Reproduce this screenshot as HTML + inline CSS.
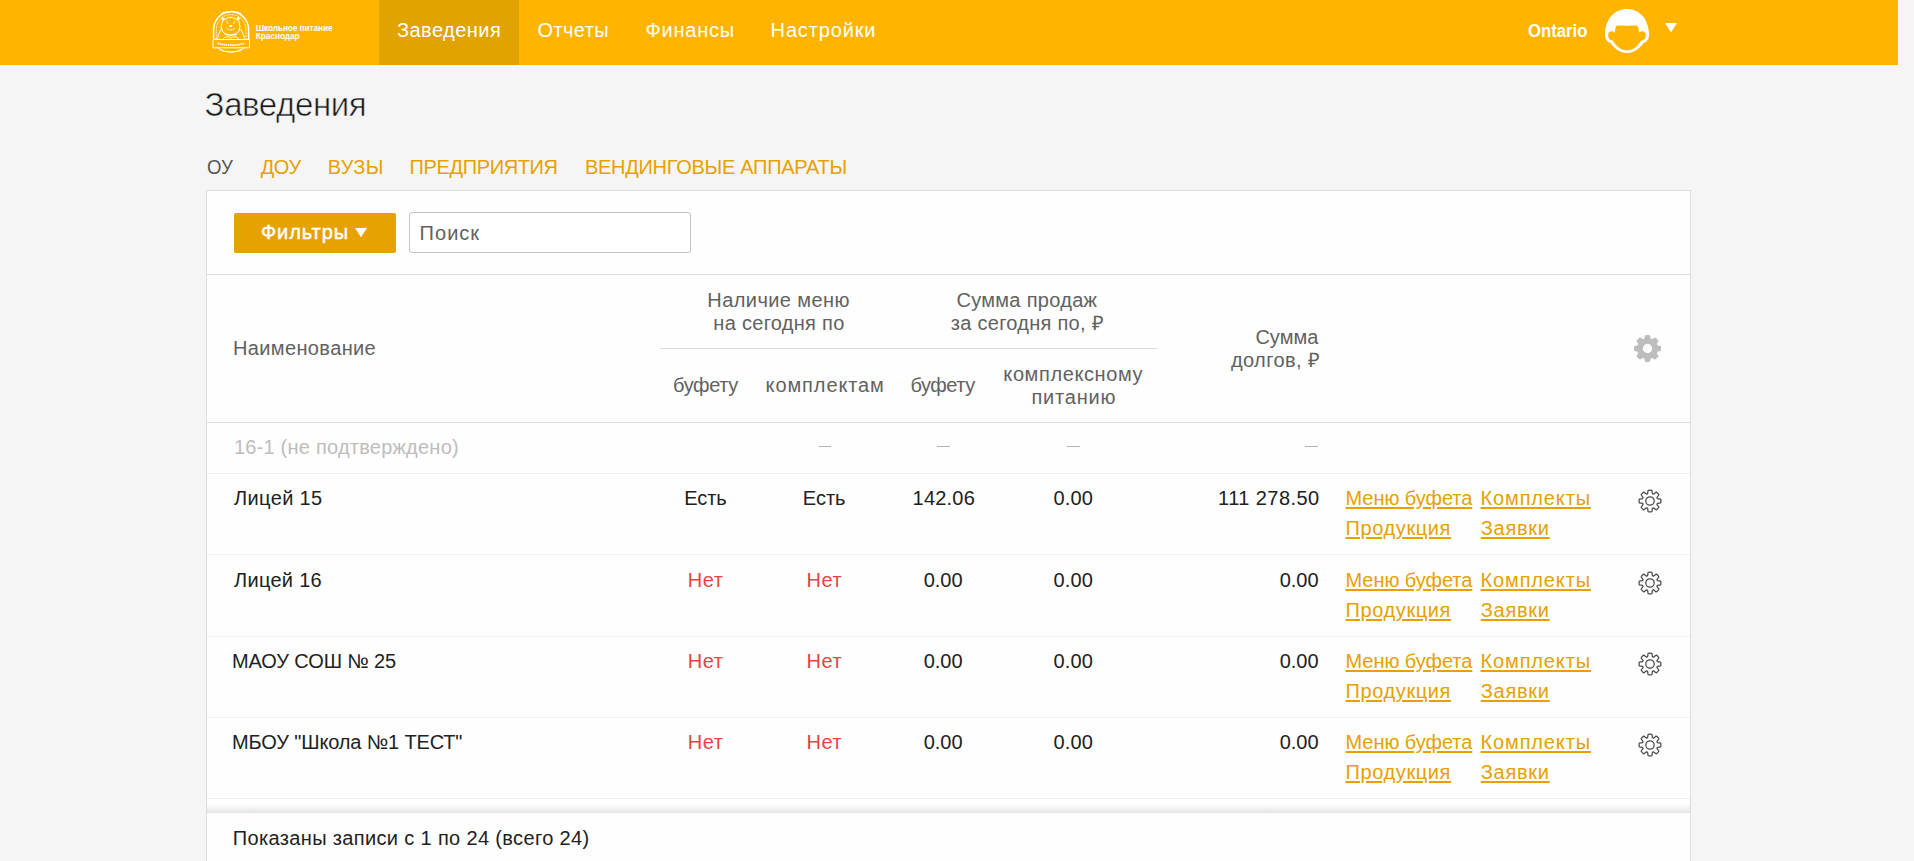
<!DOCTYPE html>
<html lang="ru"><head><meta charset="utf-8"><title>Заведения</title>
<style>
*{box-sizing:border-box}
html,body{margin:0;padding:0;width:1914px;height:861px;overflow:hidden;background:#f5f5f5;font-family:'Liberation Sans',sans-serif}
.t{position:absolute;white-space:pre;font-family:'Liberation Sans',sans-serif}
.u{text-decoration:underline;text-decoration-thickness:2px;text-underline-offset:2px}
.abs{position:absolute}
</style></head>
<body>
<div class="abs" style="left:0;top:0;width:1898px;height:65px;background:#ffb500"></div>
<div class="abs" style="left:379px;top:0;width:140px;height:65px;background:#e0a300"></div>
<svg class="abs" style="left:210px;top:8px" width="42" height="48" viewBox="0 0 42 48" fill="none" stroke="#fff" stroke-width="1">
<path d="M3.6,31.5 L3.6,21.3 A17.5,17.5 0 0 1 38.6,21.3 L38.6,31.5" stroke-width="1.5"/>
<path d="M6.3,31 L6.3,21.3 A14.8,14.8 0 0 1 35.9,21.3 L35.9,31" stroke-width="0.8" stroke-dasharray="2 0.8"/>
<path d="M11,6 Q14,3.5 17,4.5 Q21,2.5 25,4.5 Q28,3.5 31,6" stroke-width="1.1"/>
<path d="M12.5,13 Q20.6,5.5 28.7,13 Q31.5,19 28.5,24 Q20.6,30 12.7,24 Q9.7,19 12.5,13 Z" stroke-width="1"/>
<circle cx="13" cy="10.8" r="1.6" fill="#fff" stroke="none"/><circle cx="28.2" cy="10.5" r="1.6" fill="#fff" stroke="none"/>
<ellipse cx="20.8" cy="18" rx="1.8" ry="1.1" fill="#fff" stroke="none"/>
<path d="M16.5,12.5 L18,16 M25,12.5 L23.5,16 M16.5,20 Q20.8,24 25,20" stroke-width="0.8"/>
<path d="M11,21 Q8,26 7.5,31 M30.5,21 Q34,26 34.5,31 M13,31 Q17,27 21,30 Q25,27 29,31 M15,26.5 Q21,28.5 27,26.5" stroke-width="0.9"/>
<path d="M3,31.5 L39.5,31.5 L39.5,39.8 L3,39.8 Z" stroke-width="1"/>
<path d="M7.5,35.3 Q21,39 34.5,35.3" stroke-width="1.6" stroke-dasharray="1.5 0.6"/>
<path d="M7.5,40 Q21,48.5 34.5,40 M10,42 Q21,46 32,42" stroke-width="0.9"/>
</svg>
<div class="t" style="left:1528.1px;top:22px;font-size:18px;line-height:18px;font-weight:700;color:#fff;transform:scaleX(0.927);transform-origin:0 0">Ontario</div>
<svg class="abs" style="left:1605px;top:9px" width="44" height="44" viewBox="0 0 44 44">
<path fill="#fff" d="M22,0 C34,0 43,9 44,24 C44.4,30 42,33 38.5,34 C34.5,40 28.5,44 22,44 C15.5,44 9.5,40 5.5,34 C2,33 -0.4,30 0,24 C1,9 10,0 22,0 Z"/>
<path fill="#ffb500" d="M10.6,18.6 C10.8,17 12,16.6 14,16.6 C18,16.8 26,16.8 30,16.6 C32,16.6 33,17 33.3,18.6 L34.3,23.7 C36.5,21.5 40.5,21.8 40.8,25.5 C41.1,29 39,31.6 36.2,31.4 C32.5,37.8 27.5,41.2 22,41.2 C16.5,41.2 11.5,37.8 7.8,31.4 C5,31.6 2.9,29 3.2,25.5 C3.5,21.8 7.5,21.5 9.7,23.7 Z"/>
</svg>
<svg class="abs" style="left:1665px;top:23px" width="12" height="10" viewBox="0 0 12 10"><path fill="#fff" d="M0,0 L12,0 L6,9.5 Z"/></svg>
<div class="abs" style="left:206px;top:190px;width:1485px;height:700px;background:#fefefe;border:1px solid #dcdcdc"></div>
<div class="abs" style="left:207px;top:274px;width:1483px;height:1px;background:#dcdcdc"></div>
<div class="abs" style="left:234px;top:213px;width:162px;height:40px;background:#e6a200;border-radius:2px"></div>
<svg class="abs" style="left:355px;top:228px" width="12" height="10" viewBox="0 0 12 10"><path fill="#fff" d="M0,0 L12,0 L6,9.3 Z"/></svg>
<div class="abs" style="left:409px;top:212px;width:282px;height:41px;background:#fff;border:1px solid #c4c4c4;border-radius:3px"></div>
<div class="abs" style="left:660px;top:348px;width:497px;height:1px;background:#dcdcdc"></div>
<div class="abs" style="left:207px;top:422px;width:1483px;height:1px;background:#dcdcdc"></div>
<div class="abs" style="left:207px;top:473px;width:1483px;height:1px;background:#f0f0f0"></div>
<div class="abs" style="left:207px;top:554px;width:1483px;height:1px;background:#f0f0f0"></div>
<div class="abs" style="left:207px;top:636px;width:1483px;height:1px;background:#f0f0f0"></div>
<div class="abs" style="left:207px;top:717px;width:1483px;height:1px;background:#f0f0f0"></div>
<div class="abs" style="left:207px;top:798px;width:1483px;height:1px;background:#f0f0f0"></div>
<div class="abs" style="left:207px;top:804px;width:1483px;height:9px;background:linear-gradient(#fefefe,#e4e4e4)"></div>
<svg class="abs" style="left:1634px;top:335px" width="27" height="27" viewBox="0 0 27 27"><path fill="#bdbdbd" stroke="#bdbdbd" stroke-width="1.2" stroke-linejoin="round" d="M10.80,3.98L11.60,0.74A12.9,12.9 0 0 1 15.40,0.74L16.20,3.98A9.9,9.9 0 0 1 18.33,4.86L21.18,3.13A12.9,12.9 0 0 1 23.87,5.82L22.14,8.67A9.9,9.9 0 0 1 23.02,10.80L26.26,11.60A12.9,12.9 0 0 1 26.26,15.40L23.02,16.20A9.9,9.9 0 0 1 22.14,18.33L23.87,21.18A12.9,12.9 0 0 1 21.18,23.87L18.33,22.14A9.9,9.9 0 0 1 16.20,23.02L15.40,26.26A12.9,12.9 0 0 1 11.60,26.26L10.80,23.02A9.9,9.9 0 0 1 8.67,22.14L5.82,23.87A12.9,12.9 0 0 1 3.13,21.18L4.86,18.33A9.9,9.9 0 0 1 3.98,16.20L0.74,15.40A12.9,12.9 0 0 1 0.74,11.60L3.98,10.80A9.9,9.9 0 0 1 4.86,8.67L3.13,5.82A12.9,12.9 0 0 1 5.82,3.13L8.67,4.86A9.9,9.9 0 0 1 10.80,3.98Z"/><path fill="#fdfdfd" d="M8.80,13.50a4.7,4.7 0 1 0 9.40,0a4.7,4.7 0 1 0 -9.40,0Z"/></svg>
<svg class="abs" style="left:1637.5px;top:488.5px" width="24" height="24" viewBox="0 0 24 24" fill="none" stroke="#4a4a4a" stroke-width="1.25" stroke-linejoin="round"><path d="M9.60,4.68L10.10,1.27A10.9,10.9 0 0 1 13.90,1.27L14.40,4.68A7.7,7.7 0 0 1 15.48,5.13L18.25,3.07A10.9,10.9 0 0 1 20.93,5.75L18.87,8.52A7.7,7.7 0 0 1 19.32,9.60L22.73,10.10A10.9,10.9 0 0 1 22.73,13.90L19.32,14.40A7.7,7.7 0 0 1 18.87,15.48L20.93,18.25A10.9,10.9 0 0 1 18.25,20.93L15.48,18.87A7.7,7.7 0 0 1 14.40,19.32L13.90,22.73A10.9,10.9 0 0 1 10.10,22.73L9.60,19.32A7.7,7.7 0 0 1 8.52,18.87L5.75,20.93A10.9,10.9 0 0 1 3.07,18.25L5.13,15.48A7.7,7.7 0 0 1 4.68,14.40L1.27,13.90A10.9,10.9 0 0 1 1.27,10.10L4.68,9.60A7.7,7.7 0 0 1 5.13,8.52L3.07,5.75A10.9,10.9 0 0 1 5.75,3.07L8.52,5.13A7.7,7.7 0 0 1 9.60,4.68Z"/><circle cx="12" cy="12" r="4.2"/></svg>
<svg class="abs" style="left:1637.5px;top:570.5px" width="24" height="24" viewBox="0 0 24 24" fill="none" stroke="#4a4a4a" stroke-width="1.25" stroke-linejoin="round"><path d="M9.60,4.68L10.10,1.27A10.9,10.9 0 0 1 13.90,1.27L14.40,4.68A7.7,7.7 0 0 1 15.48,5.13L18.25,3.07A10.9,10.9 0 0 1 20.93,5.75L18.87,8.52A7.7,7.7 0 0 1 19.32,9.60L22.73,10.10A10.9,10.9 0 0 1 22.73,13.90L19.32,14.40A7.7,7.7 0 0 1 18.87,15.48L20.93,18.25A10.9,10.9 0 0 1 18.25,20.93L15.48,18.87A7.7,7.7 0 0 1 14.40,19.32L13.90,22.73A10.9,10.9 0 0 1 10.10,22.73L9.60,19.32A7.7,7.7 0 0 1 8.52,18.87L5.75,20.93A10.9,10.9 0 0 1 3.07,18.25L5.13,15.48A7.7,7.7 0 0 1 4.68,14.40L1.27,13.90A10.9,10.9 0 0 1 1.27,10.10L4.68,9.60A7.7,7.7 0 0 1 5.13,8.52L3.07,5.75A10.9,10.9 0 0 1 5.75,3.07L8.52,5.13A7.7,7.7 0 0 1 9.60,4.68Z"/><circle cx="12" cy="12" r="4.2"/></svg>
<svg class="abs" style="left:1637.5px;top:651.5px" width="24" height="24" viewBox="0 0 24 24" fill="none" stroke="#4a4a4a" stroke-width="1.25" stroke-linejoin="round"><path d="M9.60,4.68L10.10,1.27A10.9,10.9 0 0 1 13.90,1.27L14.40,4.68A7.7,7.7 0 0 1 15.48,5.13L18.25,3.07A10.9,10.9 0 0 1 20.93,5.75L18.87,8.52A7.7,7.7 0 0 1 19.32,9.60L22.73,10.10A10.9,10.9 0 0 1 22.73,13.90L19.32,14.40A7.7,7.7 0 0 1 18.87,15.48L20.93,18.25A10.9,10.9 0 0 1 18.25,20.93L15.48,18.87A7.7,7.7 0 0 1 14.40,19.32L13.90,22.73A10.9,10.9 0 0 1 10.10,22.73L9.60,19.32A7.7,7.7 0 0 1 8.52,18.87L5.75,20.93A10.9,10.9 0 0 1 3.07,18.25L5.13,15.48A7.7,7.7 0 0 1 4.68,14.40L1.27,13.90A10.9,10.9 0 0 1 1.27,10.10L4.68,9.60A7.7,7.7 0 0 1 5.13,8.52L3.07,5.75A10.9,10.9 0 0 1 5.75,3.07L8.52,5.13A7.7,7.7 0 0 1 9.60,4.68Z"/><circle cx="12" cy="12" r="4.2"/></svg>
<svg class="abs" style="left:1637.5px;top:732.5px" width="24" height="24" viewBox="0 0 24 24" fill="none" stroke="#4a4a4a" stroke-width="1.25" stroke-linejoin="round"><path d="M9.60,4.68L10.10,1.27A10.9,10.9 0 0 1 13.90,1.27L14.40,4.68A7.7,7.7 0 0 1 15.48,5.13L18.25,3.07A10.9,10.9 0 0 1 20.93,5.75L18.87,8.52A7.7,7.7 0 0 1 19.32,9.60L22.73,10.10A10.9,10.9 0 0 1 22.73,13.90L19.32,14.40A7.7,7.7 0 0 1 18.87,15.48L20.93,18.25A10.9,10.9 0 0 1 18.25,20.93L15.48,18.87A7.7,7.7 0 0 1 14.40,19.32L13.90,22.73A10.9,10.9 0 0 1 10.10,22.73L9.60,19.32A7.7,7.7 0 0 1 8.52,18.87L5.75,20.93A10.9,10.9 0 0 1 3.07,18.25L5.13,15.48A7.7,7.7 0 0 1 4.68,14.40L1.27,13.90A10.9,10.9 0 0 1 1.27,10.10L4.68,9.60A7.7,7.7 0 0 1 5.13,8.52L3.07,5.75A10.9,10.9 0 0 1 5.75,3.07L8.52,5.13A7.7,7.7 0 0 1 9.60,4.68Z"/><circle cx="12" cy="12" r="4.2"/></svg>
<div class="abs" style="left:818.6px;top:446px;width:12.7px;height:1px;background:#b3b3b3"></div>
<div class="abs" style="left:937.0px;top:446px;width:12.8px;height:1px;background:#b3b3b3"></div>
<div class="abs" style="left:1067.2px;top:446px;width:12.8px;height:1px;background:#b3b3b3"></div>
<div class="abs" style="left:1305.4px;top:446px;width:12.5px;height:1px;background:#b3b3b3"></div>
<div class="t" style="left:255.80px;top:23.80px;font-size:8.3px;line-height:8.3px;font-weight:700;color:#ffffff;letter-spacing:-0.093px;">Школьное питание</div>
<div class="t" style="left:255.80px;top:31.70px;font-size:8.3px;line-height:8.3px;font-weight:700;color:#ffffff;letter-spacing:-0.050px;">Краснодар</div>
<div class="t" style="left:397.00px;top:20.00px;font-size:20px;line-height:20px;font-weight:400;color:#ffffff;letter-spacing:0.450px;">Заведения</div>
<div class="t" style="left:537.50px;top:20.00px;font-size:20px;line-height:20px;font-weight:400;color:#ffffff;letter-spacing:0.400px;">Отчеты</div>
<div class="t" style="left:645.60px;top:20.00px;font-size:20px;line-height:20px;font-weight:400;color:#ffffff;letter-spacing:0.750px;">Финансы</div>
<div class="t" style="left:770.60px;top:20.00px;font-size:20px;line-height:20px;font-weight:400;color:#ffffff;letter-spacing:0.850px;">Настройки</div>
<div class="t" style="left:204.60px;top:87.60px;font-size:33px;line-height:33px;font-weight:400;color:#1a1a1a;letter-spacing:-0.400px;-webkit-text-stroke:0.6px #f5f5f5">Заведения</div>
<div class="t" style="left:206.77px;top:156.70px;font-size:20px;line-height:20px;font-weight:400;color:#555555;letter-spacing:0.000px;;transform:scaleX(0.9296);transform-origin:0 0">ОУ</div>
<div class="t" style="left:260.70px;top:156.70px;font-size:20px;line-height:20px;font-weight:400;color:#e6a100;letter-spacing:-0.400px;">ДОУ</div>
<div class="t" style="left:327.80px;top:156.70px;font-size:20px;line-height:20px;font-weight:400;color:#e6a100;letter-spacing:0.300px;">ВУЗЫ</div>
<div class="t" style="left:409.50px;top:156.70px;font-size:20px;line-height:20px;font-weight:400;color:#e6a100;letter-spacing:-0.360px;">ПРЕДПРИЯТИЯ</div>
<div class="t" style="left:584.90px;top:156.70px;font-size:20px;line-height:20px;font-weight:400;color:#e6a100;letter-spacing:-0.279px;">ВЕНДИНГОВЫЕ АППАРАТЫ</div>
<div class="t" style="left:260.90px;top:221.50px;font-size:20px;line-height:20px;font-weight:400;color:#ffffff;letter-spacing:0.950px;-webkit-text-stroke:0.45px #fff">Фильтры</div>
<div class="t" style="left:419.60px;top:222.60px;font-size:20px;line-height:20px;font-weight:400;color:#616161;letter-spacing:1.025px;">Поиск</div>
<div class="t" style="left:232.90px;top:338.00px;font-size:20px;line-height:20px;font-weight:400;color:#616161;letter-spacing:0.382px;">Наименование</div>
<div class="t" style="left:707.30px;top:289.80px;font-size:20px;line-height:20px;font-weight:400;color:#616161;letter-spacing:0.418px;">Наличие меню</div>
<div class="t" style="left:713.30px;top:312.60px;font-size:20px;line-height:20px;font-weight:400;color:#616161;letter-spacing:0.300px;">на сегодня по</div>
<div class="t" style="left:673.00px;top:374.80px;font-size:20px;line-height:20px;font-weight:400;color:#616161;letter-spacing:-0.360px;">буфету</div>
<div class="t" style="left:765.60px;top:374.80px;font-size:20px;line-height:20px;font-weight:400;color:#616161;letter-spacing:0.889px;">комплектам</div>
<div class="t" style="left:956.40px;top:289.80px;font-size:20px;line-height:20px;font-weight:400;color:#616161;letter-spacing:0.309px;">Сумма продаж</div>
<div class="t" style="left:950.80px;top:312.50px;font-size:20px;line-height:20px;font-weight:400;color:#616161;letter-spacing:0.273px;">за сегодня по, ₽</div>
<div class="t" style="left:910.50px;top:374.70px;font-size:20px;line-height:20px;font-weight:400;color:#616161;letter-spacing:-0.460px;">буфету</div>
<div class="t" style="left:1003.30px;top:364.00px;font-size:20px;line-height:20px;font-weight:400;color:#616161;letter-spacing:0.609px;">комплексному</div>
<div class="t" style="left:1031.50px;top:386.60px;font-size:20px;line-height:20px;font-weight:400;color:#616161;letter-spacing:0.767px;">питанию</div>
<div class="t" style="left:1255.40px;top:327.00px;font-size:20px;line-height:20px;font-weight:400;color:#616161;letter-spacing:0.025px;">Сумма</div>
<div class="t" style="left:1230.90px;top:350.00px;font-size:20px;line-height:20px;font-weight:400;color:#616161;letter-spacing:0.425px;">долгов, ₽</div>
<div class="t" style="left:233.90px;top:437.00px;font-size:20px;line-height:20px;font-weight:400;color:#bdbdbd;letter-spacing:0.229px;">16-1 (не подтверждено)</div>
<div class="t" style="left:234.00px;top:487.70px;font-size:20px;line-height:20px;font-weight:400;color:#212121;letter-spacing:0.371px;">Лицей 15</div>
<div class="t" style="left:684.15px;top:487.70px;font-size:20px;line-height:20px;font-weight:400;color:#212121;letter-spacing:-0.033px;">Есть</div>
<div class="t" style="left:802.85px;top:487.70px;font-size:20px;line-height:20px;font-weight:400;color:#212121;letter-spacing:-0.033px;">Есть</div>
<div class="t" style="left:912.60px;top:487.70px;font-size:20px;line-height:20px;font-weight:400;color:#212121;letter-spacing:0.200px;">142.06</div>
<div class="t" style="left:1053.50px;top:487.70px;font-size:20px;line-height:20px;font-weight:400;color:#212121;letter-spacing:0.167px;">0.00</div>
<div class="t" style="left:1218.10px;top:487.70px;font-size:20px;line-height:20px;font-weight:400;color:#212121;letter-spacing:0.433px;">111 278.50</div>
<div class="t u" style="left:1345.50px;top:487.70px;font-size:20px;line-height:20px;font-weight:400;color:#e6a100;letter-spacing:-0.050px;">Меню буфета</div>
<div class="t u" style="left:1480.60px;top:487.70px;font-size:20px;line-height:20px;font-weight:400;color:#e6a100;letter-spacing:0.850px;">Комплекты</div>
<div class="t u" style="left:1345.50px;top:518.00px;font-size:20px;line-height:20px;font-weight:400;color:#e6a100;letter-spacing:0.612px;">Продукция</div>
<div class="t u" style="left:1480.80px;top:518.00px;font-size:20px;line-height:20px;font-weight:400;color:#e6a100;letter-spacing:0.720px;">Заявки</div>
<div class="t" style="left:234.00px;top:569.80px;font-size:20px;line-height:20px;font-weight:400;color:#212121;letter-spacing:0.300px;">Лицей 16</div>
<div class="t" style="left:687.80px;top:569.80px;font-size:20px;line-height:20px;font-weight:400;color:#e84444;letter-spacing:0.500px;">Нет</div>
<div class="t" style="left:806.50px;top:569.80px;font-size:20px;line-height:20px;font-weight:400;color:#e84444;letter-spacing:0.500px;">Нет</div>
<div class="t" style="left:923.80px;top:569.80px;font-size:20px;line-height:20px;font-weight:400;color:#212121;letter-spacing:-0.067px;">0.00</div>
<div class="t" style="left:1053.50px;top:569.80px;font-size:20px;line-height:20px;font-weight:400;color:#212121;letter-spacing:0.167px;">0.00</div>
<div class="t" style="left:1279.80px;top:569.80px;font-size:20px;line-height:20px;font-weight:400;color:#212121;letter-spacing:-0.067px;">0.00</div>
<div class="t u" style="left:1345.50px;top:569.80px;font-size:20px;line-height:20px;font-weight:400;color:#e6a100;letter-spacing:-0.050px;">Меню буфета</div>
<div class="t u" style="left:1480.60px;top:569.80px;font-size:20px;line-height:20px;font-weight:400;color:#e6a100;letter-spacing:0.850px;">Комплекты</div>
<div class="t u" style="left:1345.50px;top:600.10px;font-size:20px;line-height:20px;font-weight:400;color:#e6a100;letter-spacing:0.612px;">Продукция</div>
<div class="t u" style="left:1480.80px;top:600.10px;font-size:20px;line-height:20px;font-weight:400;color:#e6a100;letter-spacing:0.720px;">Заявки</div>
<div class="t" style="left:232.00px;top:650.70px;font-size:20px;line-height:20px;font-weight:400;color:#212121;letter-spacing:-0.117px;">МАОУ СОШ № 25</div>
<div class="t" style="left:687.80px;top:650.70px;font-size:20px;line-height:20px;font-weight:400;color:#e84444;letter-spacing:0.500px;">Нет</div>
<div class="t" style="left:806.50px;top:650.70px;font-size:20px;line-height:20px;font-weight:400;color:#e84444;letter-spacing:0.500px;">Нет</div>
<div class="t" style="left:923.80px;top:650.70px;font-size:20px;line-height:20px;font-weight:400;color:#212121;letter-spacing:-0.067px;">0.00</div>
<div class="t" style="left:1053.50px;top:650.70px;font-size:20px;line-height:20px;font-weight:400;color:#212121;letter-spacing:0.167px;">0.00</div>
<div class="t" style="left:1279.80px;top:650.70px;font-size:20px;line-height:20px;font-weight:400;color:#212121;letter-spacing:-0.067px;">0.00</div>
<div class="t u" style="left:1345.50px;top:650.70px;font-size:20px;line-height:20px;font-weight:400;color:#e6a100;letter-spacing:-0.050px;">Меню буфета</div>
<div class="t u" style="left:1480.60px;top:650.70px;font-size:20px;line-height:20px;font-weight:400;color:#e6a100;letter-spacing:0.850px;">Комплекты</div>
<div class="t u" style="left:1345.50px;top:681.00px;font-size:20px;line-height:20px;font-weight:400;color:#e6a100;letter-spacing:0.612px;">Продукция</div>
<div class="t u" style="left:1480.80px;top:681.00px;font-size:20px;line-height:20px;font-weight:400;color:#e6a100;letter-spacing:0.720px;">Заявки</div>
<div class="t" style="left:232.00px;top:731.60px;font-size:20px;line-height:20px;font-weight:400;color:#212121;letter-spacing:-0.142px;">МБОУ &quot;Школа №1 ТЕСТ&quot;</div>
<div class="t" style="left:687.80px;top:731.60px;font-size:20px;line-height:20px;font-weight:400;color:#e84444;letter-spacing:0.500px;">Нет</div>
<div class="t" style="left:806.50px;top:731.60px;font-size:20px;line-height:20px;font-weight:400;color:#e84444;letter-spacing:0.500px;">Нет</div>
<div class="t" style="left:923.80px;top:731.60px;font-size:20px;line-height:20px;font-weight:400;color:#212121;letter-spacing:-0.067px;">0.00</div>
<div class="t" style="left:1053.50px;top:731.60px;font-size:20px;line-height:20px;font-weight:400;color:#212121;letter-spacing:0.167px;">0.00</div>
<div class="t" style="left:1279.80px;top:731.60px;font-size:20px;line-height:20px;font-weight:400;color:#212121;letter-spacing:-0.067px;">0.00</div>
<div class="t u" style="left:1345.50px;top:731.60px;font-size:20px;line-height:20px;font-weight:400;color:#e6a100;letter-spacing:-0.050px;">Меню буфета</div>
<div class="t u" style="left:1480.60px;top:731.60px;font-size:20px;line-height:20px;font-weight:400;color:#e6a100;letter-spacing:0.850px;">Комплекты</div>
<div class="t u" style="left:1345.50px;top:761.90px;font-size:20px;line-height:20px;font-weight:400;color:#e6a100;letter-spacing:0.612px;">Продукция</div>
<div class="t u" style="left:1480.80px;top:761.90px;font-size:20px;line-height:20px;font-weight:400;color:#e6a100;letter-spacing:0.720px;">Заявки</div>
<div class="t" style="left:232.80px;top:828.00px;font-size:20px;line-height:20px;font-weight:400;color:#212121;letter-spacing:0.351px;">Показаны записи с 1 по 24 (всего 24)</div>
</body></html>
